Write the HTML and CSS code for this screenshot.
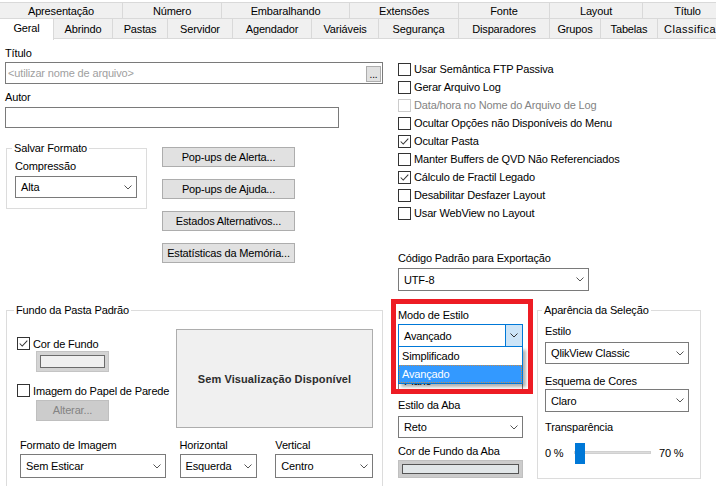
FILE: index.html
```html
<!DOCTYPE html>
<html lang="pt">
<head>
<meta charset="utf-8">
<title>Propriedades do Documento</title>
<link rel="stylesheet" href="styles.css">
</head>
<body>
<div class="tabs">
  <div class="tabrow back">
    <div class="tab">Apresentação</div>
    <div class="tab">Número</div>
    <div class="tab">Embaralhando</div>
    <div class="tab">Extensões</div>
    <div class="tab">Fonte</div>
    <div class="tab">Layout</div>
    <div class="tab">Título</div>
  </div>
  <div class="tabrow front">
    <div class="tab active">Geral</div>
    <div class="tab">Abrindo</div>
    <div class="tab">Pastas</div>
    <div class="tab">Servidor</div>
    <div class="tab">Agendador</div>
    <div class="tab">Variáveis</div>
    <div class="tab">Segurança</div>
    <div class="tab">Disparadores</div>
    <div class="tab">Grupos</div>
    <div class="tab">Tabelas</div>
    <div class="tab">Classificar</div>
  </div>
</div>

<div class="page">
  <div class="top">
    <div class="left">
      <div class="lbl first">Título</div>
      <div class="input title-input">
        <span class="placeholder">&lt;utilizar nome de arquivo&gt;</span>
        <span class="dots">...</span>
      </div>
      <div class="lbl">Autor</div>
      <div class="input author-input"></div>
      <div class="formrow">
        <fieldset class="group salvar">
          <legend>Salvar Formato</legend>
          <div class="lbl tight">Compressão</div>
          <div class="select sel-alta"><span>Alta</span><svg class="chev" viewBox="0 0 8 5"><polyline points="0.5,0.5 4,4 7.5,0.5"/></svg></div>
        </fieldset>
        <div class="buttons">
          <div class="btn">Pop-ups de Alerta...</div>
          <div class="btn">Pop-ups de Ajuda...</div>
          <div class="btn">Estados Alternativos...</div>
          <div class="btn">Estatísticas da Memória...</div>
        </div>
      </div>
    </div>
    <div class="right">
      <div class="checks">
        <div class="cbrow"><span class="cb"></span>Usar Semântica FTP Passiva</div>
        <div class="cbrow"><span class="cb"></span>Gerar Arquivo Log</div>
        <div class="cbrow disabled"><span class="cb"></span>Data/hora no Nome do Arquivo de Log</div>
        <div class="cbrow"><span class="cb"></span>Ocultar Opções não Disponíveis do Menu</div>
        <div class="cbrow"><span class="cb"><svg viewBox="0 0 13 13"><polyline points="2,6.5 5,9.5 11,3"/></svg></span>Ocultar Pasta</div>
        <div class="cbrow"><span class="cb"></span>Manter Buffers de QVD Não Referenciados</div>
        <div class="cbrow"><span class="cb"><svg viewBox="0 0 13 13"><polyline points="2,6.5 5,9.5 11,3"/></svg></span>Cálculo de Fractil Legado</div>
        <div class="cbrow"><span class="cb"></span>Desabilitar Desfazer Layout</div>
        <div class="cbrow"><span class="cb"></span>Usar WebView no Layout</div>
      </div>
      <div class="lbl export-lbl">Código Padrão para Exportação</div>
      <div class="select sel-utf"><span>UTF-8</span><svg class="chev" viewBox="0 0 8 5"><polyline points="0.5,0.5 4,4 7.5,0.5"/></svg></div>
    </div>
  </div>

  <div class="bottom">
    <fieldset class="group fundo">
      <legend>Fundo da Pasta Padrão</legend>
      <div class="fundo-row">
        <div class="fundo-left">
          <div class="cbrow small"><span class="cb"><svg viewBox="0 0 13 13"><polyline points="2,6.5 5,9.5 11,3"/></svg></span>Cor de Fundo</div>
          <div class="colorbtn"><span class="swatch"></span></div>
          <div class="cbrow small second"><span class="cb"></span>Imagem do Papel de Parede</div>
          <div class="btn disabled alterar">Alterar...</div>
        </div>
        <div class="preview">Sem Visualização Disponível</div>
      </div>
      <div class="fundo-selects">
        <div class="field f-formato">
          <div class="lbl tight">Formato de Imagem</div>
          <div class="select sel-tall"><span>Sem Esticar</span><svg class="chev" viewBox="0 0 8 5"><polyline points="0.5,0.5 4,4 7.5,0.5"/></svg></div>
        </div>
        <div class="field f-horiz">
          <div class="lbl tight">Horizontal</div>
          <div class="select sel-tall"><span>Esquerda</span><svg class="chev" viewBox="0 0 8 5"><polyline points="0.5,0.5 4,4 7.5,0.5"/></svg></div>
        </div>
        <div class="field f-vert">
          <div class="lbl tight">Vertical</div>
          <div class="select sel-tall"><span>Centro</span><svg class="chev" viewBox="0 0 8 5"><polyline points="0.5,0.5 4,4 7.5,0.5"/></svg></div>
        </div>
      </div>
    </fieldset>

    <div class="mid">
      <div class="lbl modo-lbl">Modo de Estilo</div>
      <div class="select focused"><span>Avançado</span><span class="arrowbox"><svg class="chev" viewBox="0 0 8 5"><polyline points="0.5,0.5 4,4 7.5,0.5"/></svg></span></div>
      <div class="lbl m6 covered">Estilo de Objeto</div>
      <div class="select sel-mid"><span class="plano">Plano</span><svg class="chev" viewBox="0 0 8 5"><polyline points="0.5,0.5 4,4 7.5,0.5"/></svg></div>
      <div class="lbl m6">Estilo da Aba</div>
      <div class="select sel-reto"><span>Reto</span><svg class="chev" viewBox="0 0 8 5"><polyline points="0.5,0.5 4,4 7.5,0.5"/></svg></div>
      <div class="lbl m6">Cor de Fundo da Aba</div>
      <div class="colorbtn wide"><span class="swatch"></span></div>
    </div>

    <fieldset class="group aparencia">
      <legend>Aparência da Seleção</legend>
      <div class="lbl ap-estilo">Estilo</div>
      <div class="select sel-ap1"><span>QlikView Classic</span><svg class="chev" viewBox="0 0 8 5"><polyline points="0.5,0.5 4,4 7.5,0.5"/></svg></div>
      <div class="lbl ap-esq">Esquema de Cores</div>
      <div class="select sel-ap2"><span>Claro</span><svg class="chev" viewBox="0 0 8 5"><polyline points="0.5,0.5 4,4 7.5,0.5"/></svg></div>
      <div class="lbl ap-tr">Transparência</div>
      <div class="slider">
        <span class="smin">0 %</span>
        <span class="track"><span class="thumb"></span></span>
        <span class="smax">70 %</span>
      </div>
    </fieldset>
  </div>

  <div class="droplist">
    <div class="opt">Simplificado</div>
    <div class="opt sel">Avançado</div>
  </div>
  <div class="highlight"></div>
</div>
</body>
</html>
```
FILE: styles.css
```css
html, body {
  margin: 0;
  padding: 0;
  background: #ffffff;
}
body {
  width: 716px;
  height: 486px;
  overflow: hidden;
  font-family: "Liberation Sans", Arial, sans-serif;
  font-size: 11px;
  letter-spacing: -0.15px;
  color: #000;
}

/* ---------- tabs ---------- */
.tabs {
  height: 38px;
  padding-top: 2px;
  position: relative;
}
.tabrow {
  display: flex;
  white-space: nowrap;
}
.tabrow .tab {
  box-sizing: border-box;
  flex: none;
  background: #f0f0f0;
  border: 1px solid #d9d9d9;
  border-left: none;
  text-align: center;
  overflow: hidden;
}
.back {
  height: 17px;
}
.back .tab {
  height: 17px;
  padding-top: 2px;
  line-height: 13px;
}
.back .tab:nth-child(1) { width: 123px; }
.back .tab:nth-child(2) { width: 99px; }
.back .tab:nth-child(3) { width: 128px; }
.back .tab:nth-child(4) { width: 109px; }
.back .tab:nth-child(5) { width: 91px; }
.back .tab:nth-child(6) { width: 93px; }
.back .tab:nth-child(7) { width: 90px; }

.front {
  height: 21px;
}
.front .tab {
  height: 20px;
  padding-top: 2px;
  line-height: 17px;
  border-top: none;
}
.front .tab.active {
  background: #ffffff;
  border-bottom: none;
  height: 22px;
  margin-top: -1px;
  padding-top: 1px;
  line-height: 17px;
  border-top: 1px solid #d9d9d9;
}
.front .tab:nth-child(1) { width: 54px; }
.front .tab:nth-child(2) { width: 59px; }
.front .tab:nth-child(3) { width: 55px; }
.front .tab:nth-child(4) { width: 65px; }
.front .tab:nth-child(5) { width: 79px; }
.front .tab:nth-child(6) { width: 67px; }
.front .tab:nth-child(7) { width: 80px; }
.front .tab:nth-child(8) { width: 91px; }
.front .tab:nth-child(9) { width: 51px; }
.front .tab:nth-child(10) { width: 57px; }
.front .tab:nth-child(11) { width: 80px; text-align: left; padding-left: 6px; letter-spacing: 0.5px; }

/* ---------- page ---------- */
.page {
  position: relative;
  padding-left: 5px;
}
.lbl {
  line-height: 14px;
  height: 14px;
  white-space: nowrap;
  margin-top: 6px;
}
.lbl.first { margin-top: 6px; }
.lbl.tight { margin-top: 0; }
.lbl.covered { visibility: hidden; }

.top {
  display: flex;
  align-items: flex-start;
}
.left {
  width: 378px;
  flex: none;
}
.right {
  margin-left: 15px;
  flex: 1;
}

.input {
  box-sizing: border-box;
  border: 1px solid #7a7a7a;
  background: #fff;
}
.title-input {
  margin-top: 2px;
  height: 22px;
  display: flex;
  align-items: flex-end;
  justify-content: space-between;
  padding: 0 1px 1px 2px;
}
.placeholder {
  color: #a0a0a0;
  align-self: center;
}
.dots {
  box-sizing: border-box;
  width: 15px;
  height: 16px;
  background: #e1e1e1;
  border: 1px solid #adadad;
  line-height: 16px;
  text-align: center;
  font-size: 10px;
  color: #000;
}
.author-input {
  margin-top: 3px;
  width: 334px;
  height: 21px;
}

.formrow {
  display: flex;
  align-items: flex-start;
  margin-top: 13px;
}

fieldset.group {
  margin: 0;
  border: 1px solid #dcdcdc;
  min-width: 0;
  box-sizing: border-box;
}
fieldset.group legend {
  padding: 0 2px;
  margin-left: -3px;
  line-height: 14px;
  height: 14px;
}
.salvar {
  margin-left: 1px !important;
  width: 141px;
  padding: 4px 9px 10px 8px;
}

.select {
  box-sizing: border-box;
  display: flex;
  align-items: center;
  justify-content: space-between;
  border: 1px solid #7a7a7a;
  background: #fff;
  padding: 0 4px 0 5px;
  height: 22px;
  white-space: nowrap;
}
.chev {
  width: 8px;
  height: 5px;
  fill: none;
  stroke: #555;
  stroke-width: 1;
  flex: none;
}
.sel-alta { margin-top: 3px; }

.buttons {
  margin-left: 15px;
  margin-top: 6px;
  width: 133px;
  display: flex;
  flex-direction: column;
  gap: 12px;
}
.btn {
  box-sizing: border-box;
  height: 20px;
  line-height: 18px;
  text-align: center;
  background: #e1e1e1;
  border: 1px solid #adadad;
  white-space: nowrap;
}
.btn.disabled {
  background: #cccccc;
  border-color: #bfbfbf;
  color: #838383;
}

/* checkboxes */
.checks {
  margin-top: 20px;
}
.cbrow {
  display: flex;
  align-items: center;
  height: 18px;
  white-space: nowrap;
}
.cb {
  box-sizing: border-box;
  width: 13px;
  height: 13px;
  border: 1px solid #333;
  background: #fff;
  margin-right: 3px;
  flex: none;
  display: flex;
}
.cb svg {
  width: 11px;
  height: 11px;
  fill: none;
  stroke: #333;
  stroke-width: 1.2;
}
.cbrow.disabled { color: #838383; }
.cbrow.disabled .cb { border-color: #cccccc; }

.export-lbl { margin-top: 29px; }
.sel-utf {
  margin-top: 3px;
  width: 191px;
  height: 23px;
}

/* bottom */
.bottom {
  display: flex;
  align-items: flex-start;
  margin-top: 12px;
}
.fundo {
  margin-left: 1px !important;
  width: 377px;
  flex: none;
  padding: 0 9px 30px 10px;
}
.fundo-row {
  display: flex;
  margin-top: 12px;
}
.fundo-left {
  width: 159px;
  flex: none;
}
.cbrow.small {
  height: 15px;
  margin-top: 7px;
}
.cbrow.small.second { margin-top: 11px; }
.colorbtn {
  box-sizing: border-box;
  margin-left: 19px;
  width: 73px;
  height: 21px;
  background: #d4d4d4;
  border: 1px solid #c4c4c4;
  padding: 3px;
  display: flex;
}
.swatch {
  flex: 1;
  background: #f0f0f0;
  border: 1px solid #6b6b6b;
}
.alterar {
  margin-left: 19px;
  margin-top: 2px;
  width: 73px;
  height: 21px;
  line-height: 19px;
}
.preview {
  box-sizing: border-box;
  width: 197px;
  height: 99px;
  background: #f0f0f0;
  border: 1px solid #adadad;
  display: flex;
  align-items: center;
  justify-content: center;
  font-weight: bold;
  letter-spacing: 0.1px;
  color: #2d2d2d;
  white-space: nowrap;
}
.fundo-selects {
  display: flex;
  margin-top: 10px;
  margin-left: 3px;
}
.field .select { margin-top: 2px; }
.sel-tall { height: 24px; }
.f-formato { width: 146px; }
.f-horiz { width: 78px; margin-left: 14px; }
.f-vert { width: 98px; margin-left: 18px; }

.mid {
  margin-left: 15px;
  width: 125px;
  flex: none;
}
.modo-lbl { margin-top: 5px; }
.focused {
  margin-top: 2px;
  height: 23px;
  border-color: #0078d7;
  padding-right: 0;
}
.arrowbox {
  align-self: stretch;
  width: 16px;
  background: #cce4f7;
  border-left: 1px solid #0078d7;
  display: flex;
  align-items: center;
  justify-content: center;
}
.arrowbox .chev { stroke: #333; }
.m6 { margin-top: 6px; }
.sel-mid { margin-top: 2px; height: 23px; }
.sel-reto { margin-top: 4px; height: 22px; }
.colorbtn.wide {
  margin-left: 0;
  margin-top: 2px;
  width: 125px;
  height: 18px;
  background: #cccccc;
  border-color: #c0c0c0;
}
.colorbtn.wide .swatch {
  background: #e1e6e8;
  border-color: #555;
}

.aparencia {
  margin-left: 14px !important;
  width: 164px;
  flex: none;
  padding: 0 11px 15px 7px;
}
.ap-estilo { margin-top: 7px; }
.sel-ap1 { margin-top: 4px; height: 22px; }
.ap-esq { margin-top: 10px; }
.sel-ap2 { margin-top: 1px; height: 23px; }
.ap-tr { margin-top: 8px; }
.slider {
  display: flex;
  align-items: center;
  height: 21px;
  margin-top: 8px;
  white-space: nowrap;
}
.smin { width: 29px; flex: none; }
.track {
  position: relative;
  width: 77px;
  height: 3px;
  background: #dcdcdc;
  border: 1px solid #d0d0d0;
  box-sizing: border-box;
  flex: none;
}
.thumb {
  position: absolute;
  left: 0;
  top: -9px;
  width: 10px;
  height: 21px;
  background: #0078d7;
}
.smax { margin-left: 8px; }

/* overlays */
.droplist {
  position: absolute;
  left: 398px;
  top: 307px;
  width: 125px;
  box-sizing: border-box;
  background: #fff;
  border: 1px solid #0078d7;
  border-top: none;
  box-shadow: 3px 3px 3px rgba(0, 0, 0, 0.3);
}
.opt {
  height: 18px;
  line-height: 18px;
  padding-left: 3px;
  box-sizing: border-box;
}
.opt.sel {
  background: #3399ff;
  color: #fff;
  border: 1px dotted #c58a4a;
  line-height: 16px;
  padding-left: 2px;
}
.highlight {
  position: absolute;
  left: 391px;
  top: 259px;
  width: 142px;
  height: 95px;
  box-sizing: border-box;
  border: 5px solid #ed1c24;
  pointer-events: none;
}
```
